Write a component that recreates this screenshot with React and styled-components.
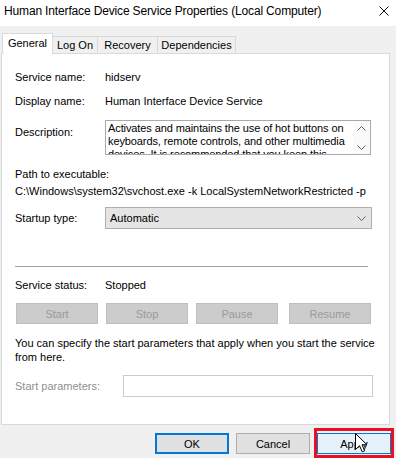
import React from "react";
import styled, { createGlobalStyle } from "styled-components";

const Global = createGlobalStyle`
  html, body { margin: 0; padding: 0; background: #f0f0f0; }
  body {
    font-family: "Liberation Sans", Arial, sans-serif;
    font-size: 11px;
    color: #000;
    overflow: hidden;
  }
  * { box-sizing: border-box; }
`;

const Window = styled.div`
  position: relative;
  width: 396px;
  height: 458px;
  background: #f0f0f0;
  display: flex;
  flex-direction: column;
  overflow: hidden;
`;

const TitleBar = styled.div`
  height: 26px;
  flex: none;
  background: #fff;
  display: flex;
  align-items: center;
  justify-content: space-between;
  padding: 0 7px 4px 4px;
  font-size: 12px;
  letter-spacing: -0.15px;
  color: #000;
`;

const Body = styled.div`
  padding: 7px 0 0 1px;
  display: flex;
  flex-direction: column;
`;

const Tabs = styled.div`
  display: flex;
  align-items: flex-end;
  margin-left: 1px;
  margin-bottom: -1px;
  position: relative;
  z-index: 1;
`;

const Tab = styled.div`
  width: ${(p) => p.$w}px;
  height: ${(p) => (p.$active ? 21 : 18)}px;
  margin-left: ${(p) => (p.$first ? 0 : -1)}px;
  background: ${(p) => (p.$active ? "#fff" : "#f0f0f0")};
  border: 1px solid #d9d9d9;
  border-bottom: ${(p) => (p.$active ? "none" : "1px solid #d9d9d9")};
  display: flex;
  align-items: center;
  justify-content: center;
  padding-bottom: ${(p) => (p.$active ? 2 : 0)}px;
  white-space: nowrap;
`;

const Panel = styled.div`
  width: 389px;
  height: 372px;
  background: #fff;
  border: 1px solid #d9d9d9;
  padding: 17px 0 0 13px;
  display: flex;
  flex-direction: column;
`;

const Row = styled.div`
  display: flex;
  align-items: ${(p) => p.$align || "center"};
  margin-top: ${(p) => p.$mt || 0}px;
  line-height: 13px;
  white-space: nowrap;
`;

const Label = styled.div`
  width: 90px;
  flex: none;
  color: ${(p) => (p.$disabled ? "#8f8f8f" : "#000")};
  padding-top: ${(p) => p.$pt || 0}px;
`;

const Text = styled.div`
  line-height: ${(p) => p.$lh || 13}px;
  margin-top: ${(p) => p.$mt || 0}px;
  white-space: nowrap;
`;

const DescBox = styled.div`
  width: 266px;
  height: 35px;
  border: 1px solid #a9a9a9;
  display: flex;
  overflow: hidden;
`;

const DescText = styled.div`
  flex: 1;
  padding: 1px 0 0 2px;
  line-height: 13px;
  white-space: nowrap;
  overflow: hidden;
  letter-spacing: -0.1px;
`;

const ScrollCol = styled.div`
  width: 17px;
  flex: none;
  background: #fafafa;
  display: flex;
  flex-direction: column;
  align-items: center;
  justify-content: space-between;
  padding: 5px 0 4px;
`;

const Combo = styled.div`
  width: 267px;
  height: 22px;
  background: #e5e5e5;
  border: 1px solid #adadad;
  display: flex;
  align-items: center;
  justify-content: space-between;
  padding: 0 5px 0 4px;
`;

const Separator = styled.div`
  width: 353px;
  height: 1px;
  background: #a0a0a0;
  margin-top: ${(p) => p.$mt}px;
  flex: none;
`;

const ButtonRow = styled.div`
  display: flex;
  margin-top: ${(p) => p.$mt}px;
  margin-left: 1px;
`;

const DisabledButton = styled.div`
  width: 82px;
  height: 21px;
  margin-left: ${(p) => p.$ml || 0}px;
  background: #cccccc;
  border: 1px solid #bfbfbf;
  color: #9a9a9a;
  display: flex;
  align-items: center;
  justify-content: center;
`;

const ParamInput = styled.div`
  width: 250px;
  height: 22px;
  margin-left: 18px;
  border: 1px solid #cccccc;
  background: #fff;
`;

const Footer = styled.div`
  display: flex;
  justify-content: flex-end;
  gap: 7px;
  padding: 8px 5px 0 0;
`;

const DialogButton = styled.div`
  position: relative;
  width: 74px;
  height: 21px;
  background: ${(p) => (p.$hover ? "#e5f1fb" : "#e1e1e1")};
  border: ${(p) => (p.$default ? "2px solid #0078d7" : p.$hover ? "1px solid #0078d7" : "1px solid #adadad")};
  display: flex;
  align-items: center;
  justify-content: center;
  font-size: 11px;
  color: #000;
`;

const Highlight = styled.div`
  position: absolute;
  left: -4px;
  right: -4px;
  top: -6px;
  bottom: -5px;
  border: 3px solid #e81123;
  pointer-events: none;
`;

const Cursor = styled.svg`
  position: absolute;
  left: 355px;
  top: 433px;
`;

const Chevron = ({ dir = "down", w = 9, h = 5 }) => (
  <svg width={w} height={h} viewBox="0 0 9 5">
    <path
      d={dir === "down" ? "M0.5 0.5 L4.5 4.5 L8.5 0.5" : "M0.5 4.5 L4.5 0.5 L8.5 4.5"}
      fill="none"
      stroke="#606060"
      strokeWidth="1"
    />
  </svg>
);

const tabs = [
  { name: "General", w: 51, active: true },
  { name: "Log On", w: 46 },
  { name: "Recovery", w: 61 },
  { name: "Dependencies", w: 79 },
];

export default function App() {
  return (
    <Window>
      <Global />
      <TitleBar>
        <span>Human Interface Device Service Properties (Local Computer)</span>
        <svg width="10" height="10" viewBox="0 0 10 10">
          <path d="M0.5 0.5 L9.5 9.5 M9.5 0.5 L0.5 9.5" stroke="#111" strokeWidth="1" />
        </svg>
      </TitleBar>
      <Body>
        <Tabs>
          {tabs.map((t, i) => (
            <Tab key={t.name} $w={t.w} $active={t.active} $first={i === 0}>
              {t.name}
            </Tab>
          ))}
        </Tabs>
        <Panel>
          <Row>
            <Label>Service name:</Label>
            <span>hidserv</span>
          </Row>
          <Row $mt={11}>
            <Label>Display name:</Label>
            <span>Human Interface Device Service</span>
          </Row>
          <Row $mt={12} $align="flex-start">
            <Label $pt={6}>Description:</Label>
            <DescBox>
              <DescText>
                Activates and maintains the use of hot buttons on
                <br />
                keyboards, remote controls, and other multimedia
                <br />
                devices. It is recommended that you keep this
              </DescText>
              <ScrollCol>
                <Chevron dir="up" />
                <Chevron dir="down" />
              </ScrollCol>
            </DescBox>
          </Row>
          <Text $mt={13}>Path to executable:</Text>
          <Text $mt={4}>C:\Windows\system32\svchost.exe -k LocalSystemNetworkRestricted -p</Text>
          <Row $mt={9}>
            <Label>Startup type:</Label>
            <Combo>
              <span>Automatic</span>
              <Chevron dir="down" />
            </Combo>
          </Row>
          <Separator $mt={37} />
          <Row $mt={12}>
            <Label>Service status:</Label>
            <span>Stopped</span>
          </Row>
          <ButtonRow $mt={11}>
            <DisabledButton>Start</DisabledButton>
            <DisabledButton $ml={8}>Stop</DisabledButton>
            <DisabledButton $ml={8}>Pause</DisabledButton>
            <DisabledButton $ml={11}>Resume</DisabledButton>
          </ButtonRow>
          <Text $mt={12} $lh={14}>
            You can specify the start parameters that apply when you start the service
            <br />
            from here.
          </Text>
          <Row $mt={11}>
            <Label $disabled>Start parameters:</Label>
            <ParamInput />
          </Row>
        </Panel>
      </Body>
      <Footer>
        <DialogButton $default>OK</DialogButton>
        <DialogButton>Cancel</DialogButton>
        <DialogButton $hover>
          Apply
          <Highlight />
        </DialogButton>
      </Footer>
      <Cursor width="13" height="20" viewBox="0 0 13 20">
        <path
          d="M0.5 0.5 L0.5 16.5 L4.5 12.7 L7.2 18.8 L9.6 17.8 L7 11.8 L12 11.8 Z"
          fill="#fff"
          stroke="#000"
          strokeWidth="1"
          strokeLinejoin="miter"
        />
      </Cursor>
    </Window>
  );
}
